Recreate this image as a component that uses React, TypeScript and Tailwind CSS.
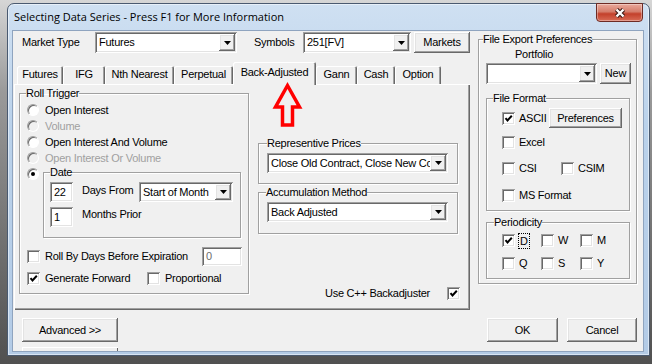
import type { ReactNode } from "react";

const FONT = "font-['Liberation_Sans',Arial,sans-serif]";
const sunken =
  "bg-white shadow-[inset_1px_1px_0_#a0a0a0,inset_-1px_-1px_0_#ffffff,inset_2px_2px_0_#696969,inset_-2px_-2px_0_#e3e3e3]";
const raised =
  "bg-[#f0f0f0] shadow-[inset_-1px_-1px_0_#696969,inset_1px_1px_0_#ffffff,inset_-2px_-2px_0_#a0a0a0,inset_2px_2px_0_#e3e3e3]";
const group = "border border-[#a0a0a0] shadow-[inset_1px_1px_0_#ffffff,1px_1px_0_#ffffff]";
const tabEdge = "shadow-[inset_1px_1px_0_#ffffff,inset_-1px_0_0_#696969,inset_-2px_0_0_#a0a0a0]";

function DropArrow() {
  return (
    <svg width="7" height="4" viewBox="0 0 7 4">
      <path d="M0 0h7L3.5 4z" fill="#000" />
    </svg>
  );
}

function Combo({ value, className = "" }: { value: string; className?: string }) {
  return (
    <div className={`flex ${sunken} ${className}`}>
      <span className="min-w-0 flex-1 self-center overflow-hidden whitespace-nowrap pl-[4px]">{value}</span>
      <span className={`my-[2px] mr-[2px] flex w-[16px] shrink-0 items-center justify-center ${raised}`}>
        <DropArrow />
      </span>
    </div>
  );
}

function Field({ children, className = "" }: { children: ReactNode; className?: string }) {
  return <div className={`flex items-center pl-[4px] ${sunken} ${className}`}>{children}</div>;
}

function Btn({ children, className = "" }: { children: ReactNode; className?: string }) {
  return <div className={`flex items-center justify-center ${raised} ${className}`}>{children}</div>;
}

function Check({ on = false }: { on?: boolean }) {
  return (
    <span className={`flex h-[13px] w-[13px] shrink-0 items-center justify-center ${sunken}`}>
      {on && (
        <svg width="9" height="9" viewBox="0 0 9 9">
          <path d="M1.5 4.2l2 2.2L7.8 1.8" fill="none" stroke="#000" strokeWidth="2" />
        </svg>
      )}
    </span>
  );
}

function Radio({ on = false, disabled = false }: { on?: boolean; disabled?: boolean }) {
  return (
    <span
      className={`flex h-[12px] w-[12px] shrink-0 items-center justify-center rounded-full border border-t-[#a0a0a0] border-l-[#a0a0a0] border-r-white border-b-white shadow-[inset_1px_1px_0_#696969] ${
        disabled ? "bg-[#f0f0f0]" : "bg-white"
      }`}
    >
      {on && <span className="h-[4px] w-[4px] rounded-full bg-black" />}
    </span>
  );
}

function RadioRow({ label, disabled = false }: { label: string; disabled?: boolean }) {
  return (
    <div className={`flex h-[16px] items-center gap-[6px] ${disabled ? "text-[#a0a0a0]" : ""}`}>
      <Radio disabled={disabled} />
      <span>{label}</span>
    </div>
  );
}

const tabs: [string, number][] = [
  ["Futures", 46],
  ["IFG", 42],
  ["Nth Nearest", 69],
  ["Perpetual", 59],
  ["Back-Adjusted", 83],
  ["Gann", 41],
  ["Cash", 38],
  ["Option", 46],
];

function Period({ label, on = false, focus = false }: { label: string; on?: boolean; focus?: boolean }) {
  return (
    <div className="flex w-[39px] items-center">
      <Check on={on} />
      {focus ? (
        <span className="ml-[3px] border border-dotted border-black px-[1px] leading-[14px]">{label}</span>
      ) : (
        <span className="ml-[4px]">{label}</span>
      )}
    </div>
  );
}

function RollTrigger() {
  return (
    <fieldset className={`${group} ml-[5px] mt-[3px] h-[207px] w-[230px]`}>
      <legend className="ml-[6px] leading-[12px]">Roll Trigger</legend>
      <div className="flex flex-col pl-[7px] pt-[3px]">
        <RadioRow label="Open Interest" />
        <RadioRow label="Volume" disabled />
        <RadioRow label="Open Interest And Volume" />
        <RadioRow label="Open Interest Or Volume" disabled />
        <div className="flex items-start">
          <span className="mt-[2px]">
            <Radio on />
          </span>
          <fieldset className={`${group} ml-[4px] h-[72px] w-[198px]`}>
            <legend className="ml-[6px] leading-[12px]">Date</legend>
            <div className="pl-[6px] pt-[4px]">
              <div className="flex items-center">
                <Field className="h-[20px] w-[23px]">22</Field>
                <span className="ml-[9px] w-[57px] -translate-y-[2px]">Days From</span>
                <Combo value="Start of Month" className="h-[20px] w-[94px]" />
              </div>
              <div className="mt-[5px] flex items-center">
                <Field className="h-[20px] w-[23px]">1</Field>
                <span className="ml-[9px] -translate-y-[3px]">Months Prior</span>
              </div>
            </div>
          </fieldset>
        </div>
        <div className="mt-[9px] flex h-[19px] items-center">
          <Check />
          <span className="ml-[5px]">Roll By Days Before Expiration</span>
          <Field className="ml-auto mr-[6px] h-[19px] w-[40px] text-[#6d6d6d]">0</Field>
        </div>
        <div className="mt-[6px] flex h-[13px] items-center">
          <Check on />
          <span className="ml-[5px] w-[102px]">Generate Forward</span>
          <Check />
          <span className="ml-[5px]">Proportional</span>
        </div>
      </div>
    </fieldset>
  );
}

function Middle() {
  return (
    <div className="ml-[9px] mt-[53px] flex w-[202px] flex-col">
      <fieldset className={`${group} h-[47px] w-[200px]`}>
        <legend className="ml-[8px] leading-[12px]">Representive Prices</legend>
        <div className="pl-[8px] pt-[4px]">
          <Combo value="Close Old Contract, Close New Contract" className="h-[20px] w-[181px]" />
        </div>
      </fieldset>
      <fieldset className={`${group} mt-[2px] h-[48px] w-[200px]`}>
        <legend className="ml-[7px] leading-[12px]">Accumulation Method</legend>
        <div className="pl-[8px] pt-[4px]">
          <Combo value="Back Adjusted" className="h-[20px] w-[181px]" />
        </div>
      </fieldset>
      <div className="mt-[53px] flex h-[13px] items-center justify-end gap-[17px]">
        <span>Use C++ Backadjuster</span>
        <Check on />
      </div>
    </div>
  );
}

function ExportPrefs() {
  return (
    <fieldset className={`${group} mt-[2px] h-[251px] w-[159px]`}>
      <legend className="ml-[4px] leading-[12px]">File Export Preferences</legend>
      <div className="pl-[7px]">
        <div className="ml-[29px] mt-[3px] leading-[13px]">Portfolio</div>
        <div className="mt-[2px] flex">
          <Combo value="" className="h-[21px] w-[111px]" />
          <Btn className="ml-[3px] h-[21px] w-[31px]">New</Btn>
        </div>
        <fieldset className={`${group} mt-[8px] h-[119px] w-[144px]`}>
          <legend className="ml-[6px] leading-[12px]">File Format</legend>
          <div className="pl-[15px] pt-[4px]">
            <div className="flex h-[20px] items-center">
              <Check on />
              <span className="ml-[4px] w-[30px]">ASCII</span>
              <Btn className="h-[20px] w-[73px]">Preferences</Btn>
            </div>
            <div className="mt-[8px] flex h-[13px] items-center">
              <Check />
              <span className="ml-[4px]">Excel</span>
            </div>
            <div className="mt-[13px] flex h-[13px] items-center">
              <Check />
              <span className="ml-[4px] w-[42px]">CSI</span>
              <Check />
              <span className="ml-[4px]">CSIM</span>
            </div>
            <div className="mt-[14px] flex h-[13px] items-center">
              <Check />
              <span className="ml-[4px]">MS Format</span>
            </div>
          </div>
        </fieldset>
        <fieldset className={`${group} mt-[5px] h-[63px] w-[144px]`}>
          <legend className="ml-[7px] leading-[12px]">Periodicity</legend>
          <div className="pl-[15px] pt-[6px]">
            <div className="flex h-[13px] items-center">
              <Period label="D" on focus />
              <Period label="W" />
              <Period label="M" />
            </div>
            <div className="mt-[10px] flex h-[13px] items-center">
              <Period label="Q" />
              <Period label="S" />
              <Period label="Y" />
            </div>
          </div>
        </fieldset>
      </div>
    </fieldset>
  );
}

export default function App() {
  return (
    <div
      className={`h-[364px] w-[652px] overflow-hidden bg-[linear-gradient(180deg,#d6d6d6_0%,#9a9a9a_25%,#505050_100%)] pl-[7px] pt-[3px] text-[11px] tracking-[-0.25px] text-black ${FONT}`}
    >
      <div className="flex h-[353px] w-[643px] flex-col rounded-t-[7px] border border-[#4a5a70] bg-[linear-gradient(180deg,#cfe0f2_0%,#bad2eb_35%,#b3cbe6_100%)] pb-[4px] pl-[5px] pr-[6px] shadow-[inset_0_0_0_1px_rgba(255,255,255,0.5)]">
        <div className="-ml-[5px] -mr-[6px] flex h-[27px] shrink-0 items-start">
          <span className="mt-[5px] pl-[6px] font-['Open_Sans',sans-serif] text-[11px] leading-[16px] tracking-normal">
            Selecting Data Series - Press F1 for More Information
          </span>
          <div className="-mt-[1px] ml-auto mr-[6px] flex h-[19px] w-[47px] items-center justify-center rounded-b-[4px] border border-[#6e2b24] bg-[linear-gradient(180deg,#eaa99b_0%,#d57d6b_45%,#c3402b_58%,#d86c56_100%)] shadow-[inset_0_0_0_1px_rgba(255,255,255,0.35)]">
            <svg width="14" height="12" viewBox="0 0 14 12">
              <path d="M3.5 2.5l7 7M10.5 2.5l-7 7" stroke="#3b1a16" strokeWidth="4.5" />
              <path d="M3.5 2.5l7 7M10.5 2.5l-7 7" stroke="#ffffff" strokeWidth="2.4" />
            </svg>
          </div>
        </div>

        <div className="flex h-[320px] w-[630px] flex-col bg-[#f0f0f0] shadow-[0_0_0_1px_#8fa4bf]">
          <div className="flex h-[279px]">
            <div className="relative w-[465px]">
              <div className="mt-[1px] flex h-[21px] items-center">
                <span className="ml-[9px] w-[73px]">Market Type</span>
                <Combo value="Futures" className="h-[21px] w-[142px]" />
                <span className="ml-[17px] w-[49px]">Symbols</span>
                <Combo value="251[FV]" className="h-[21px] w-[108px]" />
                <Btn className="ml-[3px] h-[21px] w-[56px]">Markets</Btn>
              </div>

              <div className="ml-[4px] mt-[9px] flex h-[22px] items-start">
                {tabs.map(([name, w]) =>
                  name === "Back-Adjusted" ? (
                    <div
                      key={name}
                      style={{ width: w }}
                      className={`relative z-10 h-[23px] rounded-t-[2px] bg-[#f0f0f0] pt-[2px] text-center leading-[16px] ${tabEdge}`}
                    >
                      {name}
                    </div>
                  ) : (
                    <div
                      key={name}
                      style={{ width: w }}
                      className={`mt-[4px] h-[18px] rounded-t-[2px] text-center leading-[16px] ${tabEdge}`}
                    >
                      {name}
                    </div>
                  )
                )}
              </div>

              <div className="ml-[1px] flex h-[226px] w-[456px] items-start bg-[#f0f0f0] shadow-[inset_1px_1px_0_#ffffff,inset_-1px_-1px_0_#696969,inset_-2px_-2px_0_#a0a0a0]">
                <RollTrigger />
                <Middle />
              </div>

              <svg className="absolute left-[257px] top-[49px] z-20" width="36" height="50" viewBox="0 0 36 50">
                <path
                  d="M17.5 5.5L29.5 27H22.5V45H12.5V27H5.5Z"
                  fill="none"
                  stroke="#ff0000"
                  strokeWidth="3.5"
                  strokeLinejoin="miter"
                />
              </svg>
            </div>
            <ExportPrefs />
          </div>

          <div className="mt-[8px] flex">
            <Btn className="ml-[9px] h-[24px] w-[96px]">Advanced &gt;&gt;</Btn>
            <Btn className="ml-auto h-[24px] w-[71px]">OK</Btn>
            <Btn className="ml-[9px] mr-[6px] h-[24px] w-[70px]">Cancel</Btn>
          </div>
          <div className="ml-[9px] mt-[5px] h-[4px] w-[96px] shadow-[inset_1px_1px_0_#ffffff,inset_-1px_0_0_#696969]" />
        </div>
      </div>
    </div>
  );
}
